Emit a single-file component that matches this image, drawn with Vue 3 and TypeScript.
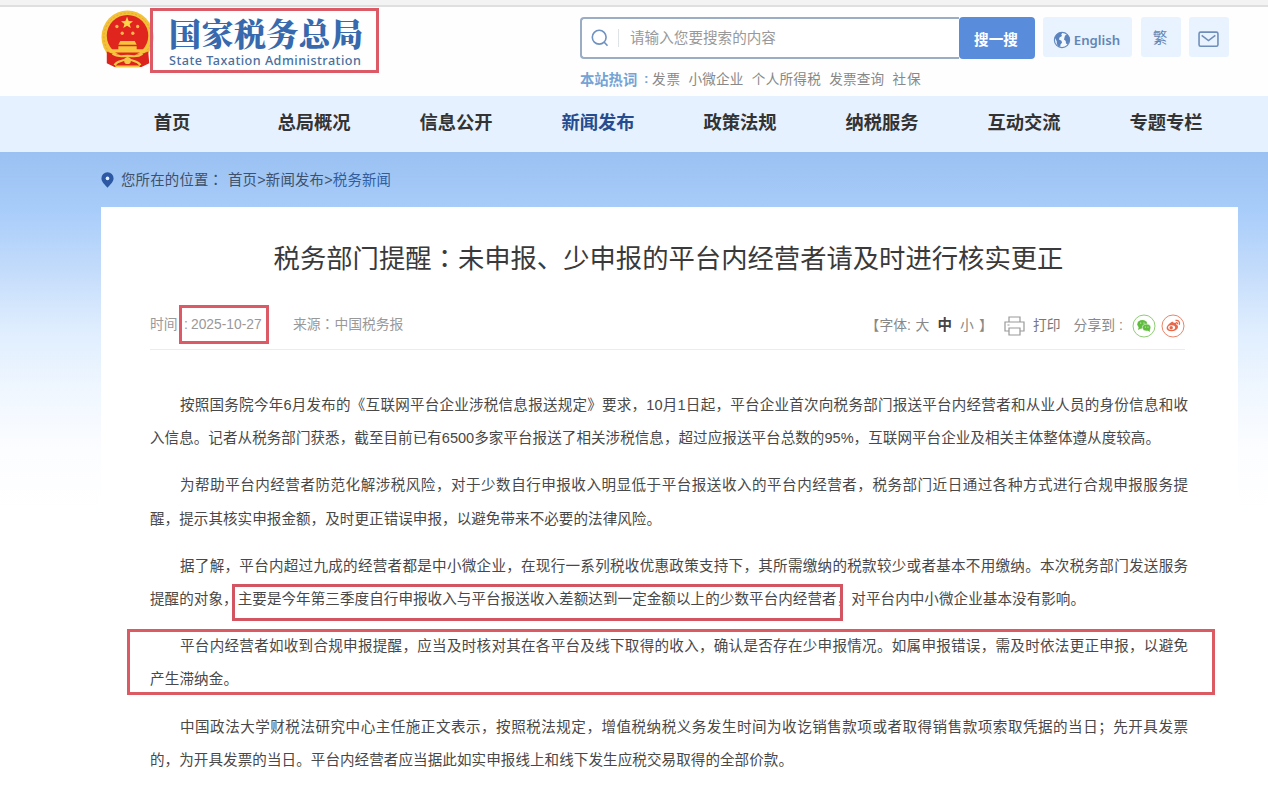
<script setup lang="ts">
interface Line { parts: { text: string; marked?: boolean }[]; width: number; indent?: boolean }
interface Paragraph { lines: Line[]; boxed?: boolean }

const nav: string[] = ['首页', '总局概况', '信息公开', '新闻发布', '政策法规', '纳税服务', '互动交流', '专题专栏']
const hot = [
  { text: '发票', width: 28 },
  { text: '小微企业', width: 55 },
  { text: '个人所得税', width: 69 },
  { text: '发票查询', width: 55 },
  { text: '社保', width: 28 },
]
const line = (text: string, width: number, indent = false): Line => ({ parts: [{ text }], width, indent })

const paragraphs: Paragraph[] = [
  { lines: [
    line('按照国务院今年6月发布的《互联网平台企业涉税信息报送规定》要求，10月1日起，平台企业首次向税务部门报送平台内经营者和从业人员的身份信息和收', 1038, true),
    line('入信息。记者从税务部门获悉，截至目前已有6500多家平台报送了相关涉税信息，超过应报送平台总数的95%，互联网平台企业及相关主体整体遵从度较高。', 1010),
  ] },
  { lines: [
    line('为帮助平台内经营者防范化解涉税风险，对于少数自行申报收入明显低于平台报送收入的平台内经营者，税务部门近日通过各种方式进行合规申报服务提', 1038, true),
    line('醒，提示其核实申报金额，及时更正错误申报，以避免带来不必要的法律风险。', 511),
  ] },
  { lines: [
    line('据了解，平台内超过九成的经营者都是中小微企业，在现行一系列税收优惠政策支持下，其所需缴纳的税款较少或者基本不用缴纳。本次税务部门发送服务', 1038, true),
    { width: 935, parts: [
      { text: '提醒的对象，' },
      { text: '主要是今年第三季度自行申报收入与平台报送收入差额达到一定金额以上的少数平台内经营者', marked: true },
      { text: '，对平台内中小微企业基本没有影响。' },
    ] },
  ] },
  { boxed: true, lines: [
    line('平台内经营者如收到合规申报提醒，应当及时核对其在各平台及线下取得的收入，确认是否存在少申报情况。如属申报错误，需及时依法更正申报，以避免', 1038, true),
    line('产生滞纳金。', 88),
  ] },
  { lines: [
    line('中国政法大学财税法研究中心主任施正文表示，按照税法规定，增值税纳税义务发生时间为收讫销售款项或者取得销售款项索取凭据的当日；先开具发票', 1038, true),
    line('的，为开具发票的当日。平台内经营者应当据此如实申报线上和线下发生应税交易取得的全部价款。', 643),
  ] },
]
</script>

<template>
  <div class="page">
    <header class="header">
      <div class="brand">
        <svg class="emblem" viewBox="0 0 56 62">
          <ellipse cx="27.5" cy="28" rx="27" ry="27.5" fill="#f3c238" />
          <ellipse cx="27.5" cy="28" rx="24.5" ry="25" fill="none" stroke="#e5a532" stroke-width="1" stroke-dasharray="2 2" />
          <circle cx="27.5" cy="26.500" r="21.5" fill="#e0251f" />
          <path d="M27 7l1.700 4.200 4.500.3-3.500 2.800 1.200 4.300-3.900-2.400-3.900 2.400 1.200-4.300-3.500-2.800 4.500-.3z" fill="#ffd54a" />
          <g fill="#ffb84a"><circle cx="16.500" cy="17" r="1.7" /><circle cx="38" cy="17" r="1.7" /><circle cx="22" cy="24" r="1.7" /><circle cx="33" cy="24" r="1.7" /></g>
          <path d="M20 32h15l2 4H18zM18 37.500h19v3h9v3.500H9v-3.500h9z" fill="#f7c63c" />
          <path d="M6 43l8 3h27l8-3 1 12-8 4H14l-8-4z" fill="#dc241d" />
          <path d="M12 45.500c6 4 10 2 15.500 2s10 2 15.500-2M14 57c4-6 9-3 13.500-7 4.500 4 9 1 13.500 7M15 58.500h25" stroke="#f5c748" stroke-width="2.200" fill="none" />
          <circle cx="27.5" cy="52.500" r="3.500" fill="#f5c748" />
        </svg>
        <div class="brand-box">
          <div class="brand-cn">国家税务总局</div>
          <div class="brand-en">State Taxation Administration</div>
        </div>
      </div>
      <div class="tools">
        <div class="tool-row">
          <div class="search">
            <svg class="mag" viewBox="0 0 18 18"><circle cx="8.2" cy="8.2" r="6.9" /><path d="M13 13l3.5 3.7" /></svg>
            <span class="placeholder">请输入您要搜索的内容</span>
          </div>
          <button class="go">搜一搜</button>
          <a class="chip english">
            <svg viewBox="0 0 18 18"><circle cx="9" cy="9" r="7.6" fill="#f3f9ff" stroke="#6289c0" stroke-width="1.2" /><path d="M1.800 6.500C3 3 6 1.200 9.500 1.500L8.300 3.500 9 5 6.500 6.500 6 8.500l2.500 1.300.5 2-1.500 1.700-.3 2.500C4 15 3.500 12 3.800 10.500zM12 4.500l2.500-1 2 3 .2 3.500-1.900 3.500-1.800-1-.3-2.500-1.700-1.500.5-2z" fill="#5b84bf" /></svg>
            <span>English</span>
          </a>
          <a class="chip trad">繁</a>
          <a class="chip mail"><svg viewBox="0 0 20 16"><rect x="1" y="1" width="18" height="13.4" rx="1.5" /><path d="M3.500 4L10 9l6.500-5" /></svg></a>
        </div>
        <div class="hot"><b>本站热词</b><i>:</i><span v-for="h in hot" :key="h.text" class="fit" :style="{ width: h.width + 'px' }">{{ h.text }}</span></div>
      </div>
    </header>

    <nav class="nav">
      <a v-for="(n, i) in nav" :key="n" :class="{ active: i === 3 }">{{ n }}</a>
    </nav>

    <main class="stage">
      <div class="crumbs">
        <svg viewBox="0 0 12 15"><path d="M6 .3a5.700 5.700 0 0 1 5.700 5.700C11.700 9.500 8 12 6 14.700 4 12 .3 9.500.3 6A5.700 5.700 0 0 1 6 .3z" fill="#2c58a4" /><circle cx="6" cy="6" r="1.700" fill="#e2efff" /></svg>
        <span class="fit where">您所在的位置<span class="mid">：</span></span>
        <span class="fit trail">首页&gt;新闻发布&gt;<em>税务新闻</em></span>
      </div>
      <article class="card">
        <h1>税务部门提醒<span class="mid">：</span>未申报、少申报的平台内经营者请及时进行核实更正</h1>
        <div class="meta">
          <span class="time">时间</span>
          <span class="date"><span class="colon">:</span>2025-10-27</span>
          <span class="source">来源<span class="mid">：</span>中国税务报</span>
          <div class="actions">
            <span class="bracket">【</span><span class="label">字体:</span><span class="size">大</span><b>中</b><span class="size small">小</span><span class="bracket end">】</span>
            <svg class="printer" viewBox="0 0 21 20"><path d="M5 6V1h11v5M5 15H1V6h19v9h-4M5 12h11v7H5zM3.500 9h2" /></svg>
            <span class="print">打印</span>
            <span class="share">分享到</span><span class="share-colon">:</span>
            <svg class="round" viewBox="0 0 24 24"><circle cx="12" cy="12" r="11" fill="#fff" stroke="#8fcd75" /><ellipse cx="10.300" cy="10.300" rx="5" ry="4.200" fill="#5fbd3e" /><path d="M7 12l-1 4 4-2z" fill="#5fbd3e" /><ellipse cx="14.600" cy="13.600" rx="4.200" ry="3.500" fill="#5fbd3e" stroke="#fff" stroke-width=".6" /><path d="M15 16l3 2-.5-3z" fill="#5fbd3e" /><g fill="#fff"><circle cx="8.700" cy="9" r=".6" /><circle cx="12" cy="9" r=".6" /><circle cx="13.300" cy="13" r=".5" /><circle cx="16" cy="13" r=".5" /></g></svg>
            <svg class="round" viewBox="0 0 24 24"><circle cx="12" cy="12" r="11" fill="#fff" stroke="#e98569" /><path d="M10.500 8c1.300-.8 2.300-.2 2 1 2-.7 3.200 0 2.700 1.400 3.300 1.100 2.300 6.600-4.700 6.800C3.500 17 4.500 11.500 10.500 8z" fill="#e8694a" /><ellipse cx="10.600" cy="13.600" rx="3.500" ry="2.300" fill="#fff" /><circle cx="10.200" cy="13.700" r="1.700" fill="#e8694a" /><path d="M14.500 6.500c3-.6 4.700 1.500 3.800 4.200M14.800 8.600c1.300-.2 2 .6 1.600 1.700" fill="none" stroke="#e8694a" stroke-width="1.300" /></svg>
          </div>
        </div>
        <div class="content">
          <div v-for="(p, i) in paragraphs" :key="i" class="para" :class="{ boxed: p.boxed }">
            <p v-for="(l, j) in p.lines" :key="j" :class="{ indent: l.indent }" :style="{ width: l.width + 'px' }"><span v-for="(s, k) in l.parts" :key="k" :class="{ marked: s.marked }">{{ s.text }}</span></p>
          </div>
        </div>
      </article>
    </main>
  </div>
</template>

<style>
body { margin: 0; overflow: hidden; }
</style>

<style scoped>
*, *::before { box-sizing: border-box; }
.page {
  width: 1268px; height: 789px; overflow: hidden; background: #fff; color: #444;
  font-family: "Liberation Sans", "Noto Sans CJK SC", sans-serif; white-space: nowrap;
}
.fit { display: inline-block; text-align: justify; text-align-last: justify; }
.mid { font-family: "Noto Sans CJK TC", sans-serif; line-height: 1; }
.header {
  height: 96px; border-top: 5px solid #f3f3f3; display: flex; padding-left: 101px;
  background: linear-gradient(#dfdfdf 0 2px, #fefefe 2px);
}
.brand { display: flex; width: 479px; padding-top: 3px; }
.emblem { width: 54px; height: 62px; margin-top: 1px; flex: none; }
.brand-box { width: 229px; height: 65px; margin-left: -5px; border: 3px solid #dc5a66; padding-left: 16px; }
.brand-cn { font: 900 32px/37px "Noto Serif CJK SC", "Noto Sans CJK SC", sans-serif; color: #3669ad; letter-spacing: .4px; margin-top: 3px; }
.brand-en { font: 500 12.6px/17px "Noto Sans", sans-serif; color: #496f9f; letter-spacing: .48px; margin-top: 1px; }
.tools { padding-top: 12px; }
.tool-row { display: flex; height: 42px; }
.search { width: 379px; height: 42px; border: 2px solid #9badc4; border-right: 0; border-radius: 4px 0 0 4px; display: flex; align-items: center; padding-left: 9px; background: #fff; }
.mag { width: 18px; height: 18px; fill: none; stroke: #6f93c0; stroke-width: 1.6; }
.placeholder { margin-left: 9px; border-left: 1px solid #dfe3e8; padding-left: 11px; font-size: 14.6px; line-height: 18px; color: #999; }
.go { width: 76px; height: 42px; border: 0; padding: 0 2px 0 0; border-radius: 4px; background: #5a8cdc; color: #fff; font: 700 14.6px "Noto Sans CJK SC", sans-serif; }
.chip { height: 40px; background: #e8f3ff; border-radius: 3px; display: flex; align-items: center; justify-content: center; color: #6485b3; }
.english { width: 89px; margin-left: 8px; font: 600 13.2px "Noto Sans", sans-serif; gap: 3px; padding: 5px 2px 0 0; }
.english svg { width: 18px; height: 18px; }
.trad { width: 40px; margin-left: 9px; font-size: 14.5px; padding: 0 2px 2px 0; }
.mail { width: 40px; margin-left: 8px; padding: 4px 1px 0 0; }
.mail svg { width: 21px; height: 17px; fill: none; stroke: #6e8eb9; stroke-width: 1.5; }
.hot { display: flex; align-items: center; height: 22px; margin-top: 8px; font-size: 13.6px; color: #888; }
.hot b { color: #75a3d5; font-size: 14.3px; width: 58px; }
.hot i { font-style: normal; width: 14px; padding-left: 6px; color: #75a3d5; font-weight: 700; }
.hot .fit { margin-right: 8.400px; }
.nav { height: 56px; background: #e5f1fe; padding-left: 101px; display: flex; }
.nav a { width: 142px; text-align: center; font: 700 18.3px/51px "Noto Sans CJK SC", sans-serif; color: #333; }
.nav .active { color: #254c8f; }
.stage { height: 637px; padding: 0 30px 0 101px; background: linear-gradient(#9ac1f2 0, #a9cdfa 60px, #c4dcfb 120px, #deedfe 175px, #f0f7ff 240px, #fcfdff 300px, #fff 360px); }
.crumbs { height: 55px; display: flex; align-items: center; color: #3f5068; font-size: 14.4px; padding-bottom: 3px; }
.crumbs svg { width: 13px; height: 16px; margin: 3px 7px 0 0; }
.where { width: 102px; margin-right: 5px; }
.trail { width: 163px; }
.trail em { font-style: normal; color: #315d9e; }
.card { height: 582px; background: #fff; padding: 0 49px; }
h1 { margin: 0; padding-top: 31px; height: 98px; text-align: center; font: 400 26.33px/38px "Noto Sans CJK SC", sans-serif; color: #3a3a3a; margin-left: -2px; }
.meta { height: 45px; width: 1035px; border-bottom: 1px solid #ececec; display: flex; align-items: flex-start; color: #999; font-size: 13.8px; line-height: 39px; }
.time { width: 29px; }
.date { width: 90px; height: 39px; border: 3px solid #dc5a66; line-height: 33px; padding-left: 2px; display: flex; }
.colon { width: 7px; }
.source { margin-left: 24px; }
.actions { margin-left: auto; display: flex; align-items: center; height: 41px; color: #888; font-size: 13.8px; }
.bracket { width: 14px; }
.label { width: 36px; }
.size { width: 14px; }
.actions b { color: #444; margin: 0 8px; font-size: 14.5px; }
.end { margin-left: 5px; width: 25px; }
.printer { width: 21px; height: 20px; fill: none; stroke: #999; stroke-width: 1.2; margin-right: 8px; }
.print { margin-right: 13px; color: #777; }
.share-colon { width: 17px; padding-left: 4px; }
.round { width: 24px; height: 24px; margin-right: 5px; }
.round:last-child { margin-right: 0; }
.content { padding-top: 39px; color: #484848; font-size: 14.55px; line-height: 33.3px; }
.para { margin-bottom: 13.8px; position: relative; }
.para p { margin: 0; height: 33.3px; text-align: justify; text-align-last: justify; }
.para .indent { padding-left: 30px; }
.marked { position: relative; }
.marked::before { content: ""; position: absolute; left: -6px; right: -6px; top: -7px; height: 37px; border: 3px solid #d45562; }
.boxed::before { content: ""; position: absolute; left: -23px; top: -1px; width: 1088px; height: 66px; border: 3px solid #dc5a62; }
</style>
